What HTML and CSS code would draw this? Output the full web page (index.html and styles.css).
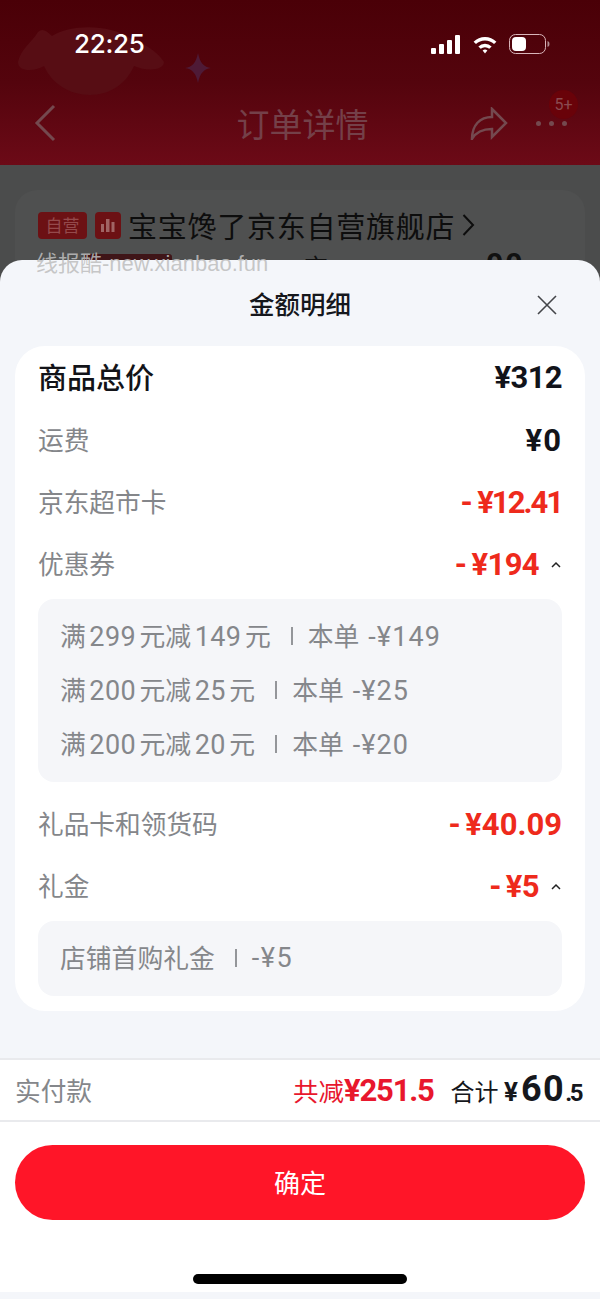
FILE: index.html
```html
<!DOCTYPE html>
<html lang="zh">
<head>
<meta charset="utf-8">
<title>金额明细</title>
<link rel="stylesheet" href="styles.css">
</head>
<body>
<div class="screen">
  <div class="behind">
    <header class="top">
      <svg class="deco" width="230" height="110" viewBox="0 0 230 110"><path class="deco-blob" d="M18 62C20 50 32 42 38 32c4-4 8-2 14 4 18-12 58-12 78 2 12 4 28 14 34 24 0 8-16 10-30 4-8 18-24 29-44 29s-38-11-46-29c-10 6-26 6-26-4z"/><path class="deco-star" d="M198 53c2 10 6 14 13 15-7 1-11 5-13 15-2-10-6-14-13-15 7-1 11-5 13-15z"/></svg>
      <div class="status">
        <span class="time">22:25</span>
        <div class="status-icons">
          <svg width="30" height="19" viewBox="0 0 30 19"><rect x="0" y="13" width="5" height="6" rx="1"/><rect x="8" y="9" width="5" height="10" rx="1"/><rect x="16" y="5" width="5" height="14" rx="1"/><rect x="24" y="0" width="5" height="19" rx="1"/></svg>
          <svg width="26" height="19" viewBox="0 0 26 20"><path d="M1 7a17 17 0 0 1 24 0l-2.500 2.600a13.500 13.500 0 0 0-19 0z"/><path d="M6 12a10 10 0 0 1 14 0l-2.500 2.600a6.500 6.500 0 0 0-9 0z"/><path d="M10.500 16.200a4 4 0 0 1 5 0L13 19.500z"/></svg>
          <svg width="41" height="20" viewBox="0 0 41 20"><rect class="batt" x="0.500" y="0.500" width="36" height="19" rx="6"/><rect x="3" y="3" width="14" height="14" rx="4"/><path class="batt-tip" d="M38.500 7v6a3 3 0 0 0 2-3 3 3 0 0 0-2-3z"/></svg>
        </div>
      </div>
      <div class="nav">
        <svg class="nav-back" width="24" height="38" viewBox="0 0 24 38"><path d="M20 2 3 19l17 17"/></svg>
        <span class="nav-title">订单详情</span>
        <svg class="nav-share" width="38" height="33" viewBox="0 0 38 33"><path d="M22 2l14 14-14 14v-8C12 22 6 25 2 32c0-14 8-22 20-22z"/></svg>
        <div class="nav-more"><i></i><i></i><i></i><span class="badge">5+</span></div>
      </div>
    </header>
    <section class="shop-card">
      <div class="shop-line">
        <span class="tag">自营</span>
        <span class="tag-icon"><svg width="14" height="14" viewBox="0 0 14 14"><rect x="0" y="6" width="3" height="8"/><rect x="5" y="1" width="3.500" height="13"/><rect x="10.500" y="4" width="3" height="10"/></svg></span>
        <span class="shop-name">宝宝馋了京东自营旗舰店</span>
        <svg class="shop-arrow" width="13" height="24" viewBox="0 0 13 24"><path d="M1.500 2 11 12l-9.500 10"/></svg>
      </div>
      <div class="shop-sub">
        <span class="sub-pill"></span>
        <span class="sub-text">京</span>
        <span class="sub-price">00</span>
      </div>
    </section>
  </div>
  <span class="watermark">线报酷-new.xianbao.fun</span>

  <main class="sheet">
    <div class="sheet-head">
      <h1 class="sheet-title">金额明细</h1>
      <svg class="close" width="20" height="20" viewBox="0 0 20 20"><path d="M1 1l18 18M19 1 1 19"/></svg>
    </div>
    <div class="card">
      <div class="row row-total"><span class="label">商品总价</span><span class="amt">¥312</span></div>
      <div class="row"><span class="label">运费</span><span class="amt amt-wide">¥0</span></div>
      <div class="row"><span class="label">京东超市卡</span><span class="amt red"><b class="minus">-</b><span class="tight">¥12.41</span></span></div>
      <div class="row"><span class="label">优惠券</span><span class="amt red"><b class="minus">-</b>¥194<svg class="chev" width="10" height="7" viewBox="0 0 10 7"><path d="M1 6l4-4 4 4"/></svg></span></div>
      <div class="detail">
        <div class="detail-line"><span>满<s>299</s>元减<s>149</s>元</span><i class="sep"></i><span>本单<s class="off">-¥149</s></span></div>
        <div class="detail-line"><span>满<s>200</s>元减<s>25</s>元</span><i class="sep"></i><span>本单<s class="off">-¥25</s></span></div>
        <div class="detail-line"><span>满<s>200</s>元减<s>20</s>元</span><i class="sep"></i><span>本单<s class="off">-¥20</s></span></div>
      </div>
      <div class="row"><span class="label">礼品卡和领货码</span><span class="amt red"><b class="minus">-</b><span class="loose">¥40.09</span></span></div>
      <div class="row"><span class="label">礼金</span><span class="amt red"><b class="minus">-</b>¥5<svg class="chev" width="10" height="7" viewBox="0 0 10 7"><path d="M1 6l4-4 4 4"/></svg></span></div>
      <div class="detail detail-single">
        <div class="detail-line"><span>店铺首购礼金</span><i class="sep"></i><s class="flat">-¥5</s></div>
      </div>
    </div>
    <div class="spacer"></div>
    <footer class="foot">
      <div class="pay">
        <span class="pay-label">实付款</span>
        <div class="pay-right">
          <span class="saved">共减<b>¥251.5</b></span>
          <span class="sum">合计 <em>¥</em><strong>60</strong><small>.5</small></span>
        </div>
      </div>
      <div class="action">
        <button class="confirm" type="button">确定</button>
        <div class="home"></div>
      </div>
    </footer>
    <div class="foot-end"></div>
  </main>
</div>
</body>
</html>
```

FILE: styles.css
```css
* { box-sizing: border-box; }
html, body { margin: 0; padding: 0; }
body {
  width: 600px;
  height: 1299px;
  overflow: hidden;
  font-family: "Noto Sans CJK SC", "Noto Sans", sans-serif;
}
.screen { position: relative; width: 600px; height: 1299px; overflow: hidden; background: #4b4c4c; }

.top {
  position: relative;
  height: 165px;
  background: linear-gradient(180deg, #4a0007 0%, #54040d 50%, #6c0a17 100%);
  overflow: hidden;
}
.deco { position: absolute; left: 0; top: 0; }
.deco-blob { fill: #570d14; }
.deco-star { fill: #4e1a36; }
.status {
  position: relative;
  display: flex;
  justify-content: space-between;
  align-items: center;
  height: 36px;
  margin-top: 26px;
  padding: 0 50px 0 74px;
}
.time { font: 500 26px/36px "Inter", "Roboto", sans-serif; color: #fff; letter-spacing: -0.3px; }
.status-icons { display: flex; align-items: center; gap: 11px; }
.status-icons svg { fill: #fff; display: block; }
.status-icons .batt { fill: none; stroke: #d9b5ba; stroke-width: 1; }
.status-icons .batt-tip { fill: #b08a90; }
.nav {
  position: relative;
  display: flex;
  align-items: center;
  height: 60px;
  margin-top: 31px;
  padding: 0 33px 0 34px;
}
.nav-back { fill: none; stroke: #74494f; stroke-width: 3; }
.nav-title {
  position: absolute;
  left: 0;
  right: 0;
  padding-left: 5px;
  text-align: center;
  font-size: 33px;
  line-height: 56px;
  color: #744049;
}
.nav-share { margin-left: auto; fill: none; stroke: #74494f; stroke-width: 2.500; }
.nav-more { position: relative; display: flex; gap: 8px; margin-left: 28px; }
.nav-more i { width: 5px; height: 5px; border-radius: 50%; background: #74494f; }
.badge {
  position: absolute;
  top: -31px;
  right: -11px;
  width: 29px;
  height: 29px;
  border-radius: 50%;
  background: #690209;
  color: #8a4a50;
  font: 16px/29px "Roboto", sans-serif;
  text-align: center;
}

.shop-card {
  height: 120px;
  margin: 25px 15px 0;
  padding: 19px 22px 0 23px;
  border-radius: 22px;
  background: #4f5050;
}
.shop-line { display: flex; align-items: center; height: 32px; }
.tag {
  width: 49px;
  height: 27px;
  border-radius: 4px;
  background: #6c1114;
  color: #944a4c;
  font-size: 17px;
  line-height: 26px;
  text-align: center;
}
.tag-icon {
  display: flex;
  align-items: center;
  justify-content: center;
  width: 26px;
  height: 27px;
  margin-left: 8px;
  border-radius: 4px;
  background: #6c1114;
}
.tag-icon svg { fill: #a06464; }
.shop-name { margin-left: 7px; font-size: 29px; line-height: 30px; letter-spacing: 0.75px; color: #0d0d0d; }
.shop-arrow { margin-left: 7px; fill: none; stroke: #0d0d0d; stroke-width: 2; }
.shop-sub { position: relative; display: flex; align-items: flex-start; height: 30px; margin-top: 13px; }
.sub-pill { width: 88px; height: 10px; margin-left: 46px; border-radius: 3px; background: #3f1518; }
.sub-text { margin-left: 132px; font-size: 24px; line-height: 24px; color: #111; }
.sub-price { margin-left: 158px; font: 700 30px/24px "Roboto", sans-serif; letter-spacing: 2px; color: #111; margin-top: -2px; }

.watermark {
  position: absolute;
  left: 36px;
  top: 249px;
  z-index: 2;
  font-size: 22px;
  line-height: 30px;
  color: rgba(190, 190, 190, 0.85);
  font-family: "Liberation Sans", "Noto Sans CJK SC", sans-serif;
}

.sheet {
  position: absolute;
  left: 0;
  right: 0;
  top: 260px;
  bottom: 0;
  display: flex;
  flex-direction: column;
  background: #f4f6fa;
  border-radius: 22px 22px 0 0;
}
.sheet-head { position: relative; flex: none; height: 86px; }
.sheet-title {
  margin: 0;
  padding-top: 24px;
  font-size: 25.500px;
  line-height: 38px;
  font-weight: 500;
  text-align: center;
  color: #15171c;
}
.close { position: absolute; right: 43px; top: 35px; fill: none; stroke: #44464a; stroke-width: 1.600; }

.card {
  flex: none;
  margin: 0 15px;
  padding: 0 23px;
  height: 665px;
  background: #fff;
  border-radius: 30px;
}
.row {
  display: flex;
  justify-content: space-between;
  align-items: center;
  height: 62px;
}
.row-total { height: 63px; }
.label { font-size: 25.700px; line-height: 36px; padding-bottom: 3px; color: #84868a; }
.row-total .label { font-size: 29px; font-weight: 500; color: #121318; }
.amt {
  display: flex;
  align-items: center;
  padding-top: 1px;
  font: 700 31px/36px "Roboto", sans-serif;
  letter-spacing: -0.6px;
  color: #11131a;
}
.amt-wide { letter-spacing: 1px; }
.amt.red { color: #ee2a1c; }
.tight { letter-spacing: -2px; }
.loose { letter-spacing: 0; }
.minus { font-weight: 700; margin-right: 5px; }
.chev { margin: 0 1px 0 12px; fill: none; stroke: #222; stroke-width: 1.500; }

.detail {
  height: 183px;
  margin: 4px 0 11px;
  padding: 11px 22px;
  border-radius: 16px;
  background: #f5f6f9;
}
.detail-single { height: 75px; margin: 4px 0 0; }
.detail-line {
  display: flex;
  align-items: center;
  height: 54px;
  padding-bottom: 5px;
  font-size: 25.800px;
  color: #85878b;
}
.detail s { text-decoration: none; font-family: "Roboto", sans-serif; font-size: 27px; margin: 0 3.500px; letter-spacing: 0.4px; }
.detail s.off { margin: 0 0 0 9px; letter-spacing: 1.100px; }
.detail s.flat { margin: 3px 0 0; letter-spacing: 1.500px; }
.sep { width: 2px; height: 18px; margin: 2px 15px 0 20px; background: #94969a; }

.spacer { flex: none; height: 47px; }
.foot { flex: 1; display: flex; flex-direction: column; background: #fff; }
.pay {
  flex: none;
  display: flex;
  justify-content: space-between;
  align-items: center;
  height: 64px;
  padding: 0 17px 2px 15px;
  border-top: 2px solid #e9eaed;
  border-bottom: 2px solid #e9eaed;
}
.pay-label { font-size: 25.700px; color: #85878b; }
.pay-right { display: flex; align-items: baseline; gap: 17px; }
.saved { font-size: 25.500px; color: #e8172d; }
.saved b { font: 700 31px/36px "Roboto", sans-serif; letter-spacing: -1.200px; }
.sum { font-size: 24px; color: #15171c; }
.sum em { font: 700 26px "Roboto", sans-serif; }
.sum strong { margin-left: 3px; font: 700 36px "Roboto", sans-serif; letter-spacing: 1.500px; }
.sum small { font: 700 24px "Roboto", sans-serif; letter-spacing: -2.500px; margin-right: 2px; }

.action { flex: 1; padding: 23px 15px 0; display: flex; flex-direction: column; align-items: center; }
.confirm {
  width: 100%;
  height: 75px;
  border: 0;
  padding: 0 0 2px;
  border-radius: 38px;
  background: #ff1528;
  color: #fff;
  font-family: inherit;
  font-size: 26px;
}
.home { width: 214px; height: 10px; margin-top: 54px; border-radius: 5px; background: #000; }
.foot-end { flex: none; height: 7px; background: #f4f6fa; }
```
